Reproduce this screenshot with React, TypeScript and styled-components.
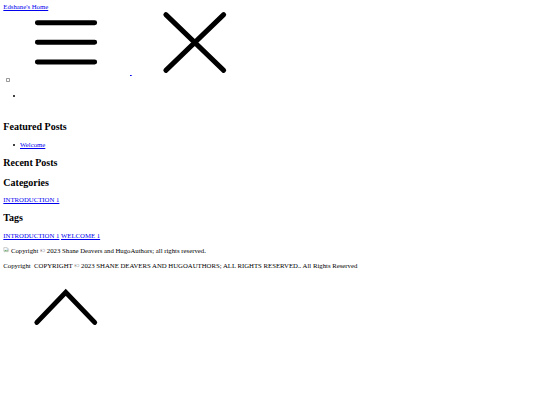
import styled, { createGlobalStyle } from "styled-components";

const GlobalStyle = createGlobalStyle`
    body {
        margin: 3.33px;
        background: #fff;
        color: #000;
        font-family: "Liberation Serif", "Times New Roman", serif;
        font-size: 6.76px;
        line-height: 7.67px;
    }
    a {
        color: #0000ee;
    }
`;

const Page = styled.div``;

const HomeLink = styled.a`
    display: inline-block;
`;

const Nav = styled.div``;

const Icon = styled.svg`
    width: 125px;
    height: 62.5px;
    vertical-align: baseline;
`;

const Toggle = styled.input`
    appearance: none;
    display: block;
    box-sizing: border-box;
    width: 4.7px;
    height: 4.7px;
    margin: 2.5px 0 0 2.4px;
    border: 0.6px solid #9a9a9a;
    border-radius: 0.8px;
    background: #fff;
`;

const MenuList = styled.ul`
    list-style: none;
    margin: 9.5px 0 21.6px;
    padding-left: 16.67px;
`;

const Item = styled.li`
    position: relative;
    min-height: 7.67px;

    &::before {
        content: "";
        position: absolute;
        left: -7.1px;
        top: 2.8px;
        width: 2.1px;
        height: 2.1px;
        border-radius: 50%;
        background: #000;
    }
`;

const Heading = styled.h2`
    font-size: 10px;
    line-height: 11.5px;
    font-weight: bold;
    margin: 8.3px 0;
`;

const PostList = styled.ul`
    list-style: none;
    margin: 8.3px 0;
    padding-left: 16.67px;
`;

const TermRow = styled.div``;

const Footer = styled.footer``;

const Line = styled.p`
    margin: 7px 0;
`;

const Upper = styled.span`
    text-transform: uppercase;
`;

const Broken = styled.svg`
    width: 6.67px;
    height: 6.67px;
    margin-right: 1px;
    vertical-align: -0.8px;
`;

function MenuIcon() {
    return (
        <Icon viewBox="0 0 24 24" fill="none" stroke="#000" strokeWidth={1.9} strokeLinecap="round">
            <path d="M1.2 4.5h22M1.2 12h22M1.2 19.6h22" />
        </Icon>
    );
}

function CloseIcon() {
    return (
        <Icon viewBox="0 0 24 24" fill="none" stroke="#000" strokeWidth={1.9} strokeLinecap="round">
            <path d="M1 1.4L23.2 22.8M23.2 1.4L1 22.8" />
        </Icon>
    );
}

function TopIcon() {
    return (
        <Icon viewBox="0 0 24 24" fill="none" stroke="#000" strokeWidth={1.9} strokeLinecap="round" strokeLinejoin="miter">
            <polyline points="1,17.8 12.1,6.3 23.2,17.8" />
        </Icon>
    );
}

function BrokenImage() {
    return (
        <Broken viewBox="0 0 16 16">
            <path d="M2 1.5h8l3.5 3.5v5l-2 1.5-2-1.5-2 1.5-2-1.5-2 1.5-1.5-1z" fill="#fff" stroke="#8a8a8a" strokeWidth="1" />
            <path d="M2.5 10l3-3.5 2.5 2.5 2-1.5 3 2.5" fill="#5fa35f" />
            <circle cx="10" cy="5" r="1.2" fill="#4a8ad0" />
        </Broken>
    );
}

export default function App() {
    return (
        <>
            <GlobalStyle />
            <Page>
                <HomeLink href="#">Edshane's Home</HomeLink>
                <Nav>
                    <MenuIcon /> <a href="#">&nbsp;</a><CloseIcon />
                </Nav>
                <Toggle type="checkbox" />
                <MenuList>
                    <Item />
                </MenuList>

                <Heading>Featured Posts</Heading>
                <PostList>
                    <Item>
                        <a href="#">Welcome</a>
                    </Item>
                </PostList>

                <Heading>Recent Posts</Heading>

                <Heading>Categories</Heading>
                <TermRow>
                    <a href="#">INTRODUCTION 1</a>
                </TermRow>

                <Heading>Tags</Heading>
                <TermRow>
                    <a href="#">INTRODUCTION 1</a> <a href="#">WELCOME 1</a>
                </TermRow>

                <Footer>
                    <Line>
                        <BrokenImage />Copyright © 2023 Shane Deavers and HugoAuthors; all rights reserved.
                    </Line>
                    <Line>
                        Copyright&nbsp; <Upper>Copyright © 2023 Shane Deavers and HugoAuthors; all rights reserved.</Upper>. All Rights Reserved
                    </Line>
                    <TopIcon />
                </Footer>
            </Page>
        </>
    );
}
